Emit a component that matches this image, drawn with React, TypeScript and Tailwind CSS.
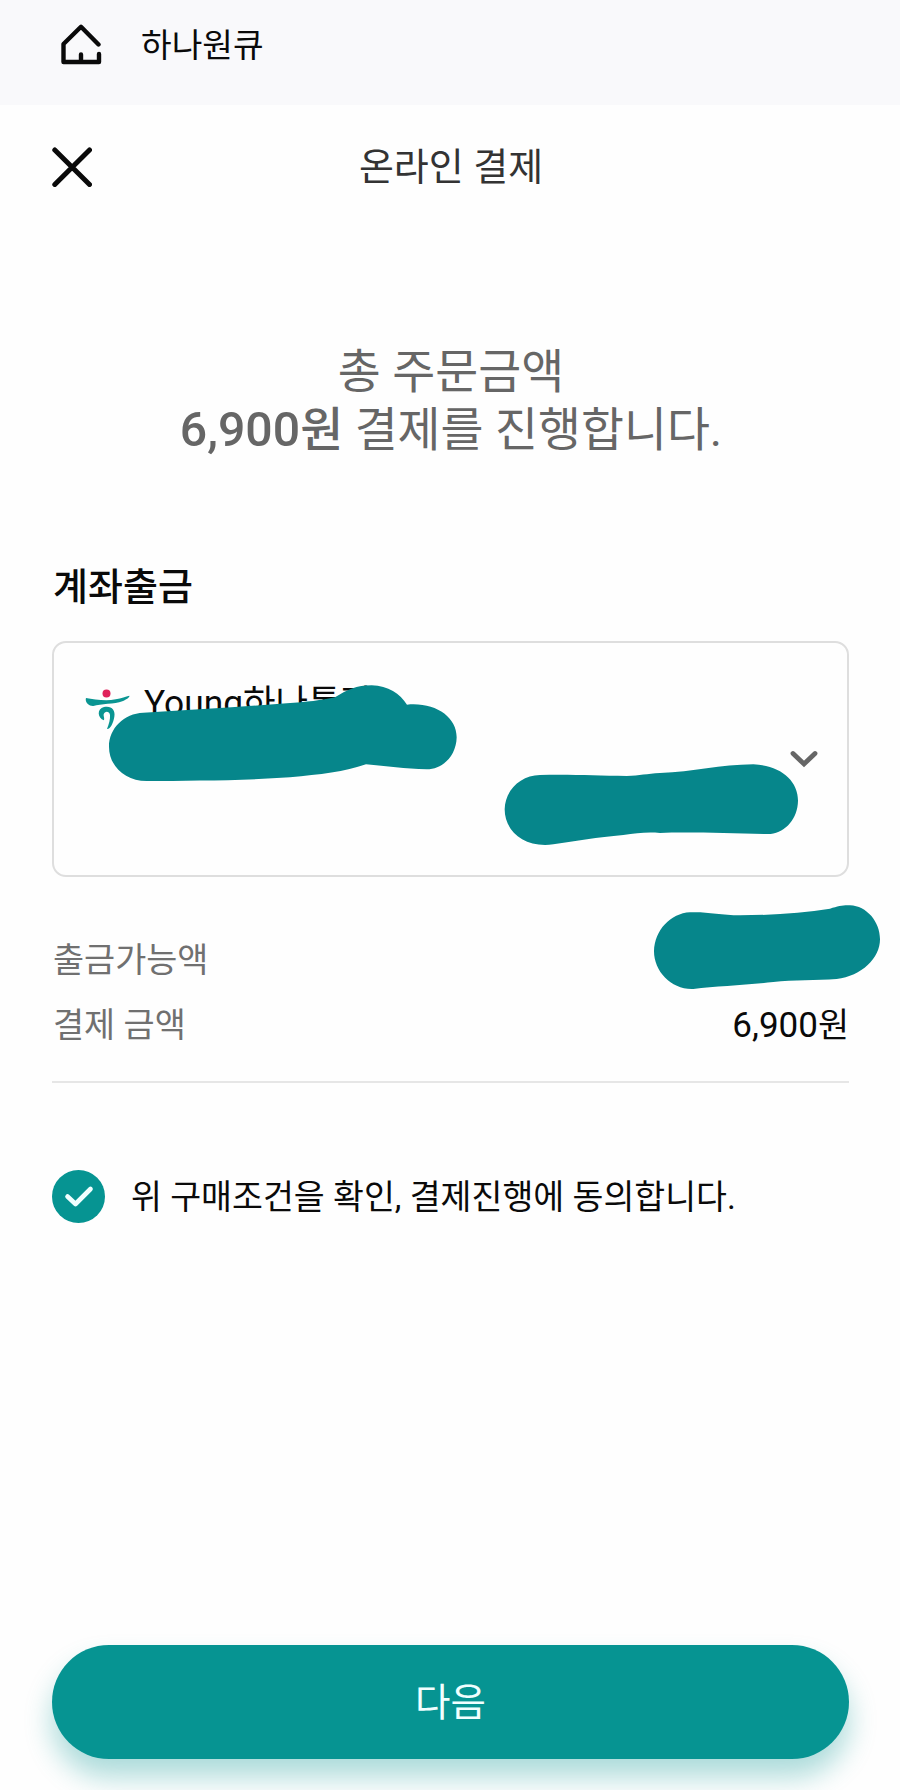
import type { ReactNode } from "react";

export default function App() {
  return (
    <div className="flex h-[1790px] w-[900px] flex-col overflow-hidden bg-[#fefefe] font-[Roboto,'Noto_Sans_CJK_KR',sans-serif] text-[#0a0a0a]">
      <header className="flex h-[105px] shrink-0 items-start bg-[#f9f9fb] pl-[60px]">
        <HomeIcon />
        <span className="ml-[39px] mt-[22px] text-[33.3px] leading-[48px]">
          하나원큐
        </span>
      </header>

      <main className="flex flex-1 flex-col pl-[52px] pr-[51px]">
        <div className="ml-px grid h-[124px] grid-cols-[40px_1fr_40px] items-center">
          <button type="button" aria-label="닫기" className="-ml-px -mt-px">
            <CloseIcon />
          </button>
          <h1 className="text-center text-[38px] leading-[56px] text-[#333]">
            온라인 결제
          </h1>
        </div>

        <p className="ml-px mt-[114px] text-center text-[46.7px] leading-[58px] text-[#666]">
          총 주문금액
          <br />
          <strong className="font-medium">
            <span className="text-[48.2px]">6,900</span>원
          </strong>{" "}
          결제를 진행합니다.
        </p>

        <h2 className="ml-px mt-[100px] text-[38px] font-medium leading-[56px]">
          계좌출금
        </h2>

        <AccountSelect />

        <dl className="mt-[51px] border-b-2 border-[#e6e6e6] pb-[23px]">
          <Row label="출금가능액">
            <MaskBalance />
          </Row>
          <Row label="결제 금액">
            <span className="text-[35px]">6,900</span>원
          </Row>
        </dl>

        <label className="mt-[87px] flex items-center">
          <CheckIcon />
          <span className="ml-[26px] whitespace-nowrap pt-[2px] text-[33.6px] leading-[48px]">
            위 구매조건을 확인, 결제진행에 동의합니다.
          </span>
        </label>

        <button
          type="button"
          className="mb-[31px] mt-auto h-[114px] rounded-full bg-[#069492] pt-[2px] text-[38.5px] text-[#f0ffff] shadow-[0_18px_28px_rgba(6,148,146,0.33)]"
        >
          다음
        </button>
      </main>
    </div>
  );
}

function AccountSelect() {
  return (
    <div className="relative mt-[26px] flex h-[236px] shrink-0 items-center justify-between rounded-[14px] border-2 border-[#dedede] pl-[31px] pr-[29px]">
      <div className="flex self-start pt-[36px]">
        <HanaLogo />
        <span className="ml-[14px] text-[35.3px] leading-[48px]">
          Young하나통장
        </span>
      </div>
      <svg width="28" height="18" viewBox="0 0 28 18" fill="none">
        <path
          d="M3 3.5 14 14 25 3.5"
          stroke="#666"
          strokeWidth="4.8"
          strokeLinecap="round"
        />
      </svg>

      {/* marker strokes hiding the account number and its balance */}
      <svg
        className="absolute left-[52px] top-[41px] h-[98px] w-[352px]"
        viewBox="198 402 1056 294"
      >
        <path
          d="M207 590C207 535 252 490 310 488C450 480 600 470 740 460C800 456 845 451 885 442C920 420 950 406 995 406C1045 407 1080 432 1101 464C1185 456 1250 500 1250 562C1249 615 1212 657 1160 658C1095 657 1040 648 978 643C915 665 840 674 750 682C610 692 450 692 320 693C255 693 207 648 207 590Z"
          fill="#06868b"
        />
      </svg>
      <svg
        className="absolute left-[449px] top-[120px] h-[84px] w-[296px]"
        viewBox="69 399 888 252"
      >
        <path
          d="M74 538C75 480 122 436 180 435C280 433 350 437 440 438C480 437 500 431 540 429C640 426 720 404 820 403C900 406 954 450 954 512C953 565 918 606 872 612C760 611 630 605 540 609C500 605 470 610 430 615C350 622 290 632 220 643C135 655 74 605 74 538Z"
          fill="#06868b"
        />
      </svg>
    </div>
  );
}

function Row({ label, children }: { label: string; children: ReactNode }) {
  return (
    <div className="relative flex h-[65px] items-center justify-between text-[33.8px] leading-[48px]">
      <dt className="pl-px pt-px text-[#707070]">{label}</dt>
      <dd>{children}</dd>
    </div>
  );
}

function MaskBalance() {
  return (
    <svg
      className="absolute -right-[33px] -top-[24px] h-[86px] w-[230px]"
      viewBox="66 42 690 258"
    >
      <path
        d="M72 184C74 120 122 70 180 67C225 64 270 75 330 76C430 76 520 68 600 56C625 48 640 45 660 46C710 48 750 95 750 148C750 205 695 258 620 267C560 272 490 269 430 276C350 285 260 288 190 297C125 300 72 245 72 184Z"
        fill="#06868b"
      />
    </svg>
  );
}

function HomeIcon() {
  return (
    <svg
      className="mt-[24px]"
      width="42"
      height="41"
      viewBox="0 0 42 41"
      fill="none"
      stroke="#0a0a0a"
      strokeWidth="4.4"
      strokeLinecap="round"
      strokeLinejoin="round"
    >
      <path d="M38.5 20.5 21 2.8 3.5 20V38H39V30M21 30.5V37" />
    </svg>
  );
}

function CloseIcon() {
  return (
    <svg width="40" height="40" viewBox="0 0 40 40" fill="none">
      <path
        d="M2.8 3 37.5 37.5M37.5 3 2.8 37.5"
        stroke="#0a0a0a"
        strokeWidth="5"
        strokeLinecap="round"
      />
    </svg>
  );
}

function HanaLogo() {
  return (
    <svg className="mt-[10px] h-[42px] w-[45px]" viewBox="133 420 135 126">
      <circle cx="197.5" cy="433.5" r="12" fill="#e0225b" />
      <path
        d="M136 447C160 451 195 457 225 451C243 448 255 443 266 440C268 445 257 452 245 457C222 466 180 464 158 471C144 472 132 459 136 447Z"
        fill="#0a9592"
      />
      <path
        d="M190 514C170 507 168 479 190 474C211 469 225 482 221 503C218 522 209 541 199 540C205 525 209 511 208 498C206 485 192 485 189 496C188 502 192 506 190 514Z"
        fill="#0a9592"
      />
    </svg>
  );
}

function CheckIcon() {
  return (
    <svg width="53" height="53" viewBox="0 0 53 53" fill="none">
      <circle cx="26.5" cy="26.5" r="26.5" fill="#069492" />
      <path
        d="M15.5 26.5 23.5 34 38.5 19"
        stroke="#f0ffff"
        strokeWidth="4.6"
        strokeLinecap="round"
        strokeLinejoin="round"
      />
    </svg>
  );
}
